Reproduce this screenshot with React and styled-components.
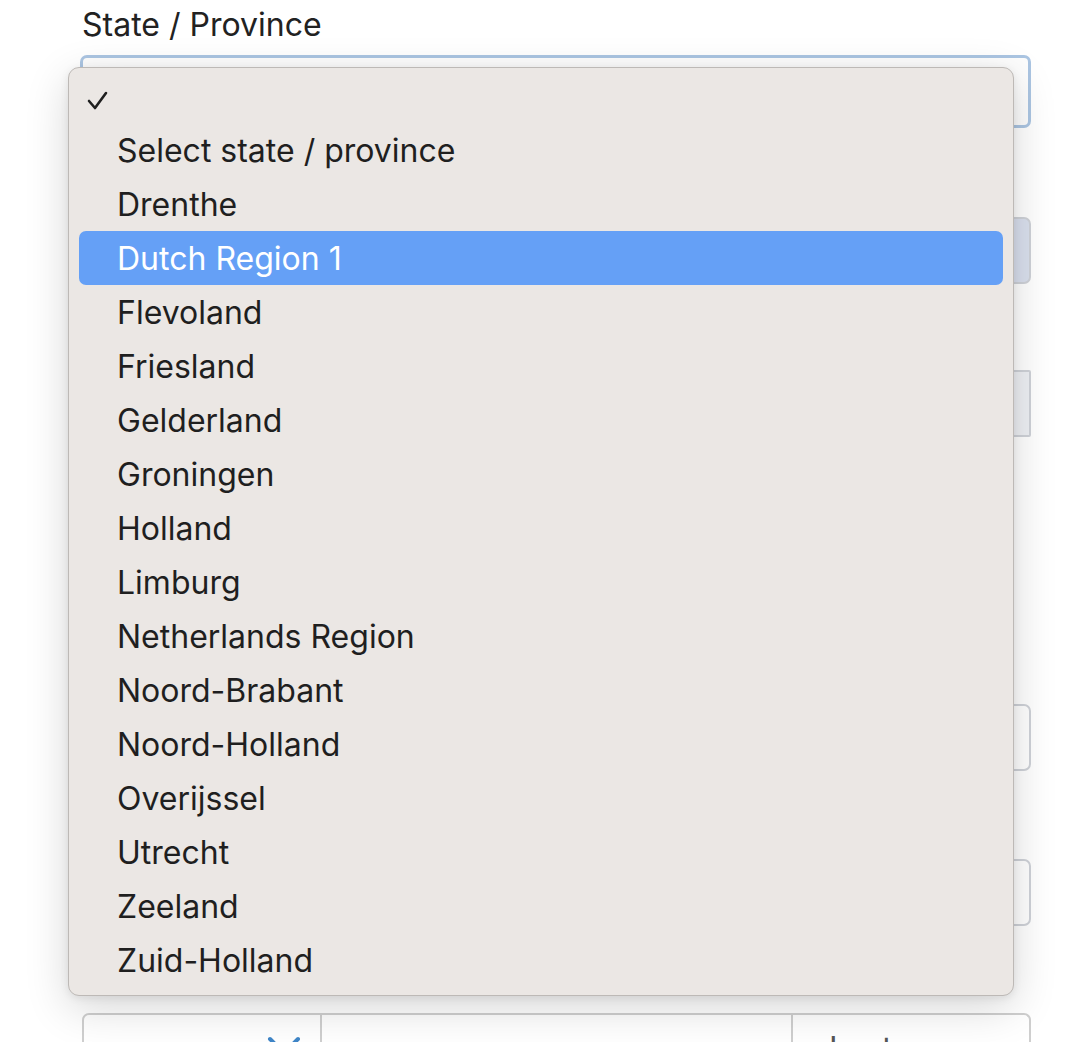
import React from "react";
import styled, { createGlobalStyle } from "styled-components";

const Global = createGlobalStyle`
  html, body {
    margin: 0;
    padding: 0;
    background: #ffffff;
    height: 1042px;
    overflow: hidden;
  }
  body {
    font-family: Inter, "Noto Sans", "Liberation Sans", sans-serif;
    color: #1f1f1f;
  }
`;

const provinces = [
  "Select state / province",
  "Drenthe",
  "Dutch Region 1",
  "Flevoland",
  "Friesland",
  "Gelderland",
  "Groningen",
  "Holland",
  "Limburg",
  "Netherlands Region",
  "Noord-Brabant",
  "Noord-Holland",
  "Overijssel",
  "Utrecht",
  "Zeeland",
  "Zuid-Holland",
];

const Page = styled.div`
  position: relative;
  height: 1042px;
  overflow: hidden;
`;

const Form = styled.form`
  display: flex;
  flex-direction: column;
  padding: 5px 55px 0 82px;
`;

const Label = styled.label`
  display: block;
  font-size: 32px;
  line-height: 40px;
  color: #222;
`;

// labels of the fields under the open menu are covered, keep their room only
const LabelSpace = styled.div`
  height: 40px;
`;

const Field = styled.div`
  display: flex;
  flex-direction: column;
  margin-top: ${(p) => p.$top || 0}px;
`;

const FocusBox = styled.div`
  margin-top: 10px;
  margin-left: -2px;
  height: 67px;
  border: 3px solid #abc5e2;
  border-radius: 7px;
  background: #fdfdfd;
`;

const InputBox = styled.div`
  margin-top: 9px;
  height: 63px;
  border: 2px solid #cfd2d8;
  border-radius: ${(p) => (p.$square ? "2px" : "7px")};
  background: ${(p) => p.$fill || "#ffffff"};
`;

const BottomRow = styled.div`
  margin-top: 87px;
  display: grid;
  grid-template-columns: 236px 471px 1fr;
  height: 67px;
  border: 2px solid #cfcfcf;
  border-radius: 7px;
  border-bottom: none;
`;

const Cell = styled.div`
  position: relative;
  border-left: ${(p) => (p.$first ? "none" : "2px solid #cfcfcf")};
  font-size: 32px;
  color: #555;
  padding: 14px 0 0 36px;
`;

const Chevron = styled.svg`
  position: absolute;
  right: 18px;
  top: 20px;
`;

const Menu = styled.div`
  position: absolute;
  left: 68px;
  top: 67px;
  width: 944px;
  padding: 3px 0 8px;
  background: #ebe7e4;
  border: 1px solid #bdb9b6;
  border-radius: 11px;
  box-shadow: 0 12px 44px rgba(0, 0, 0, 0.16), 0 2px 8px rgba(0, 0, 0, 0.08);
`;

const CheckRow = styled.div`
  height: 52px;
  display: flex;
  align-items: center;
  padding-left: 18px;
  padding-top: 8px;
  box-sizing: border-box;
`;

const Option = styled.div`
  height: 54px;
  margin: 0 10px;
  padding-left: 38px;
  display: flex;
  align-items: center;
  border-radius: 7px;
  font-size: 32px;
  color: ${(p) => (p.$active ? "#ffffff" : "#1f1f1f")};
  background: ${(p) => (p.$active ? "#65a0f6" : "transparent")};
`;

export default function App() {
  return (
    <Page>
      <Global />
      <Form>
        <Label>State / Province</Label>
        <FocusBox />
        <Field $top={40}>
          <LabelSpace />
          <InputBox $fill="#dae0ee" />
        </Field>
        <Field $top={37}>
          <LabelSpace />
          <InputBox $square $fill="#eef0f4" />
        </Field>
        <Field $top={218}>
          <LabelSpace />
          <InputBox />
        </Field>
        <Field $top={39}>
          <LabelSpace />
          <InputBox />
        </Field>
        <BottomRow>
          <Cell $first>
            <Chevron width="36" height="24" viewBox="0 0 36 24">
              <polyline
                points="4,4 18,18 32,4"
                fill="none"
                stroke="#3f86c8"
                strokeWidth="4"
                strokeLinecap="round"
                strokeLinejoin="round"
              />
            </Chevron>
          </Cell>
          <Cell />
          <Cell>Last</Cell>
        </BottomRow>
      </Form>
      <Menu>
        <CheckRow>
          <svg width="22" height="20" viewBox="0 0 22 20">
            <polyline
              points="2,10 8,17 19,2"
              fill="none"
              stroke="#1f1f1f"
              strokeWidth="2.6"
              strokeLinecap="round"
              strokeLinejoin="round"
            />
          </svg>
        </CheckRow>
        {provinces.map((name) => (
          <Option key={name} $active={name === "Dutch Region 1"}>
            {name}
          </Option>
        ))}
      </Menu>
    </Page>
  );
}
